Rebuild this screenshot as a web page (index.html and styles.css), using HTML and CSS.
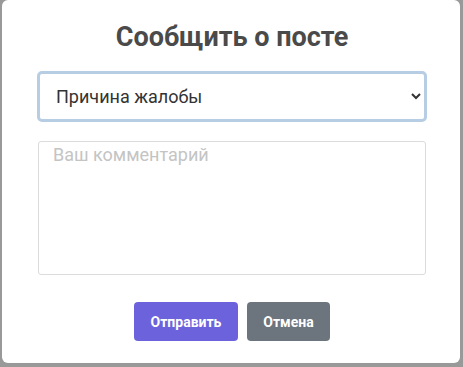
FILE: index.html
```html
<!DOCTYPE html>
<html lang="ru">

<head>
    <meta charset="UTF-8">
    <meta name="viewport" content="width=device-width, initial-scale=1.0">
    <title>Сообщить о посте</title>
    <link rel="stylesheet" href="styles.css">
</head>

<body>
    <div class="report-modal">
        <h2>Сообщить о посте</h2>
        <form id="reportForm">
            <select class="report-reason" name="reason" autofocus>
                <option value="">Причина жалобы</option>
                <option value="spam">Спам</option>
                <option value="abuse">Оскорбления</option>
            </select>
            <textarea class="report-comment" name="comment" placeholder="Ваш комментарий"></textarea>
            <div class="report-actions">
                <button type="submit" class="btn btn-send">Отправить</button>
                <button type="button" class="btn btn-cancel">Отмена</button>
            </div>
        </form>
    </div>
</body>

</html>
```

FILE: styles.css
```css
body {
    font-family: Roboto, "Noto Sans", sans-serif;
    background-color: #999;
    margin: 0;
}

.report-modal {
    background-color: white;
    border-radius: 6px;
    width: 458px;
    height: 363px;
    margin-left: 2px;
    padding: 0 34px 0 36px;
    box-sizing: border-box;
}

.report-modal h2 {
    margin: 0;
    padding-top: 23px;
    font-size: 27px;
    line-height: 28px;
    font-weight: 700;
    color: #4a4a4a;
    text-align: center;
}

.report-reason {
    display: block;
    width: calc(100% + 2px);
    margin: 20px -1px 0;
    height: 51px;
    padding: 0 12px 0 12px;
    border: 3px solid #b6cde3;
    border-radius: 5px;
    background-color: white;
    font-family: inherit;
    font-size: 18px;
    color: #333;
    outline: none;
    box-sizing: border-box;
}

.report-comment {
    display: block;
    width: 100%;
    height: 134px;
    margin-top: 19px;
    padding: 2px 14px;
    border: 1px solid #dcdcdc;
    border-radius: 3px;
    font-family: inherit;
    font-size: 18px;
    resize: none;
    box-sizing: border-box;
}

.report-comment::placeholder {
    color: #c4c4c4;
}

.report-actions {
    display: flex;
    justify-content: center;
    gap: 9px;
    margin-top: 27px;
}

.btn {
    height: 39px;
    padding: 0 16px;
    border: none;
    border-radius: 4px;
    color: white;
    font-family: inherit;
    font-size: 14px;
    font-weight: 700;
    cursor: pointer;
}

.btn-send {
    background-color: #6c63dc;
    width: 104px;
}

.btn-cancel {
    background-color: #6c757d;
    width: 83px;
}
```
